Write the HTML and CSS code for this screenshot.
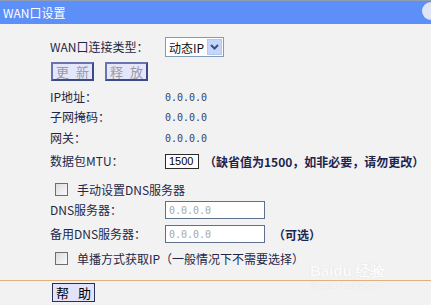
FILE: index.html
```html
<!DOCTYPE html>
<html>
<head>
<meta charset="utf-8">
<link rel="stylesheet" href="styles.css">
</head>
<body>
<div class="page">
  <div class="titlebar">
    <span class="title">WAN口设置</span>
    <span class="knob"></span>
  </div>
  <div class="form">
    <div class="row r-type">
      <span class="label">WAN口连接类型：</span>
      <span class="select"><span class="sel-text">动态IP</span><span class="sel-btn"><svg width="9" height="6" viewBox="0 0 9 6"><path d="M1 1 L4.5 4.5 L8 1" fill="none" stroke="#3b4f86" stroke-width="2"/></svg></span></span>
    </div>
    <div class="row r-btns">
      <span class="btn disabled">更 新</span>
      <span class="btn disabled">释 放</span>
    </div>
    <div class="row r-ip"><span class="label">IP地址：</span><span class="value">0.0.0.0</span></div>
    <div class="row r-mask"><span class="label">子网掩码：</span><span class="value">0.0.0.0</span></div>
    <div class="row r-gw"><span class="label">网关：</span><span class="value">0.0.0.0</span></div>
    <div class="row r-mtu"><span class="label">数据包MTU：</span><span class="input mtu">1500</span><span class="note">（缺省值为1500，如非必要，请勿更改）</span></div>
    <div class="row r-cb1"><span class="check"></span><span class="cb-label">手动设置DNS服务器</span></div>
    <div class="row r-dns"><span class="label">DNS服务器：</span><span class="input ip">0.0.0.0</span></div>
    <div class="row r-dns2"><span class="label">备用DNS服务器：</span><span class="input ip">0.0.0.0</span><span class="note">（可选）</span></div>
    <div class="row r-cb2"><span class="check"></span><span class="cb-label">单播方式获取IP（一般情况下不需要选择）</span></div>
  </div>
  <div class="footer">
    <span class="btn help">帮 助</span>
  </div>
  <div class="watermark"><span class="wm-big">Bai<span class="wm-du">du</span>经验</span><span class="wm-small">jingyan.baidu.com</span></div>
</div>
</body>
</html>
```

FILE: styles.css
```css
html, body {
  margin: 0;
  padding: 0;
  background: #ffffff;
}
body {
  font-family: "Noto Sans CJK SC", "DejaVu Sans", sans-serif;
  font-size: 12px;
  color: #1f2747;
}
.page {
  position: relative;
  width: 431px;
  height: 305px;
  background: #f2f2f2;
  overflow: hidden;
}
.titlebar {
  position: relative;
  height: 23px;
  border-top: 1px solid #8e9db3;
  background: #5c8ff8;
  display: flex;
  align-items: center;
}
.title {
  color: #ffffff;
  padding-left: 3px;
  font-size: 12px;
  line-height: 14px;
}
.knob {
  position: absolute;
  right: -9px;
  top: 1px;
  width: 18px;
  height: 18px;
  border-radius: 50%;
  background: #dfe5f7;
}
.form {
  padding-left: 50px;
  padding-top: 12px;
}
.row {
  display: flex;
  align-items: center;
  height: 20px;
  white-space: nowrap;
}
.label {
  width: 115px;
  flex: none;
  line-height: 14px;
}
.value {
  color: #3a4262;
  font-family: "DejaVu Sans Mono", monospace;
  font-size: 10px;
}
.r-type { height: 22px; }
.select {
  display: flex;
  align-items: center;
  width: 57px;
  height: 18px;
  border: 1px solid #7f9db9;
  background: #ffffff;
}
.sel-text {
  flex: 1;
  padding-left: 3px;
  color: #111;
}
.sel-btn {
  width: 15px;
  height: 16px;
  margin-right: 1px;
  background: #c5d5fb;
  border: 1px solid #b5c7ef;
  box-sizing: border-box;
  display: flex;
  align-items: center;
  justify-content: center;
}
.r-btns {
  margin-top: 4px;
  height: 19px;
  gap: 11px;
  padding-left: 1px;
}
.btn {
  display: inline-flex;
  align-items: center;
  justify-content: center;
  height: 19px;
  box-sizing: border-box;
  border: 2px solid #3c4a86;
  border-top-color: #6a74ac;
  border-left-color: #6a74ac;
  background: #e4e6fb;
  font-size: 13px;
  letter-spacing: 2px;
  padding-left: 2px;
  white-space: nowrap;
}
.btn.disabled {
  width: 43px;
  color: #9a9aa6;
}
.r-ip { margin-top: 6px; }
.r-gw { margin-top: 1px; }
.r-mtu { margin-top: 3px; }
.input {
  display: flex;
  align-items: center;
  box-sizing: border-box;
  background: #ffffff;
  padding-left: 3px;
}
.mtu {
  width: 34px;
  height: 15px;
  border: 1px solid #2a2a2a;
  color: #000;
  font-family: "Liberation Sans", sans-serif;
  font-size: 11px;
}
.note {
  margin-left: 5px;
  font-weight: bold;
  color: #1c2550;
}
.r-cb1 { margin-top: 8px; }
.check {
  width: 13px;
  height: 13px;
  box-sizing: border-box;
  margin-left: 5px;
  border: 1px solid #6e6e6e;
  background: linear-gradient(135deg, #dcdcdc, #fafafa);
}
.cb-label {
  margin-left: 9px;
}
.r-dns { margin-top: 1px; }
.ip {
  width: 100px;
  height: 18px;
  border: 1px solid #5f6f8e;
  color: #a8a8a8;
  font-family: "DejaVu Sans Mono", monospace;
  font-size: 10px;
}
.r-dns2 { margin-top: 4px; }
.r-dns2 .note { margin-left: 8px; }
.r-cb2 { margin-top: 4px; }
.footer {
  position: absolute;
  left: 0;
  right: 0;
  top: 280px;
  border-top: 1px solid #e2b07e;
  padding-left: 52px;
  padding-top: 2px;
}
.btn.help {
  width: 43px;
  color: #000;
  border: 1px solid #2b2f5c;
  background: #e2e3fb;
  font-size: 13px;
  letter-spacing: 3px;
  padding-left: 3px;
}
.watermark {
  position: absolute;
  left: 310px;
  top: 262px;
  display: flex;
  flex-direction: column;
  align-items: center;
  color: #ffffff;
  opacity: 0.75;
}
.wm-big {
  font-family: "Liberation Sans", sans-serif;
  font-weight: bold;
  font-size: 15px;
  line-height: 18px;
  text-shadow: 0 0 1px #ccc;
}
.wm-du { margin-right: 3px; }
.wm-small {
  font-family: "Liberation Sans", sans-serif;
  font-size: 9px;
  line-height: 10px;
  text-shadow: 0 0 1px #ccc;
}
```
